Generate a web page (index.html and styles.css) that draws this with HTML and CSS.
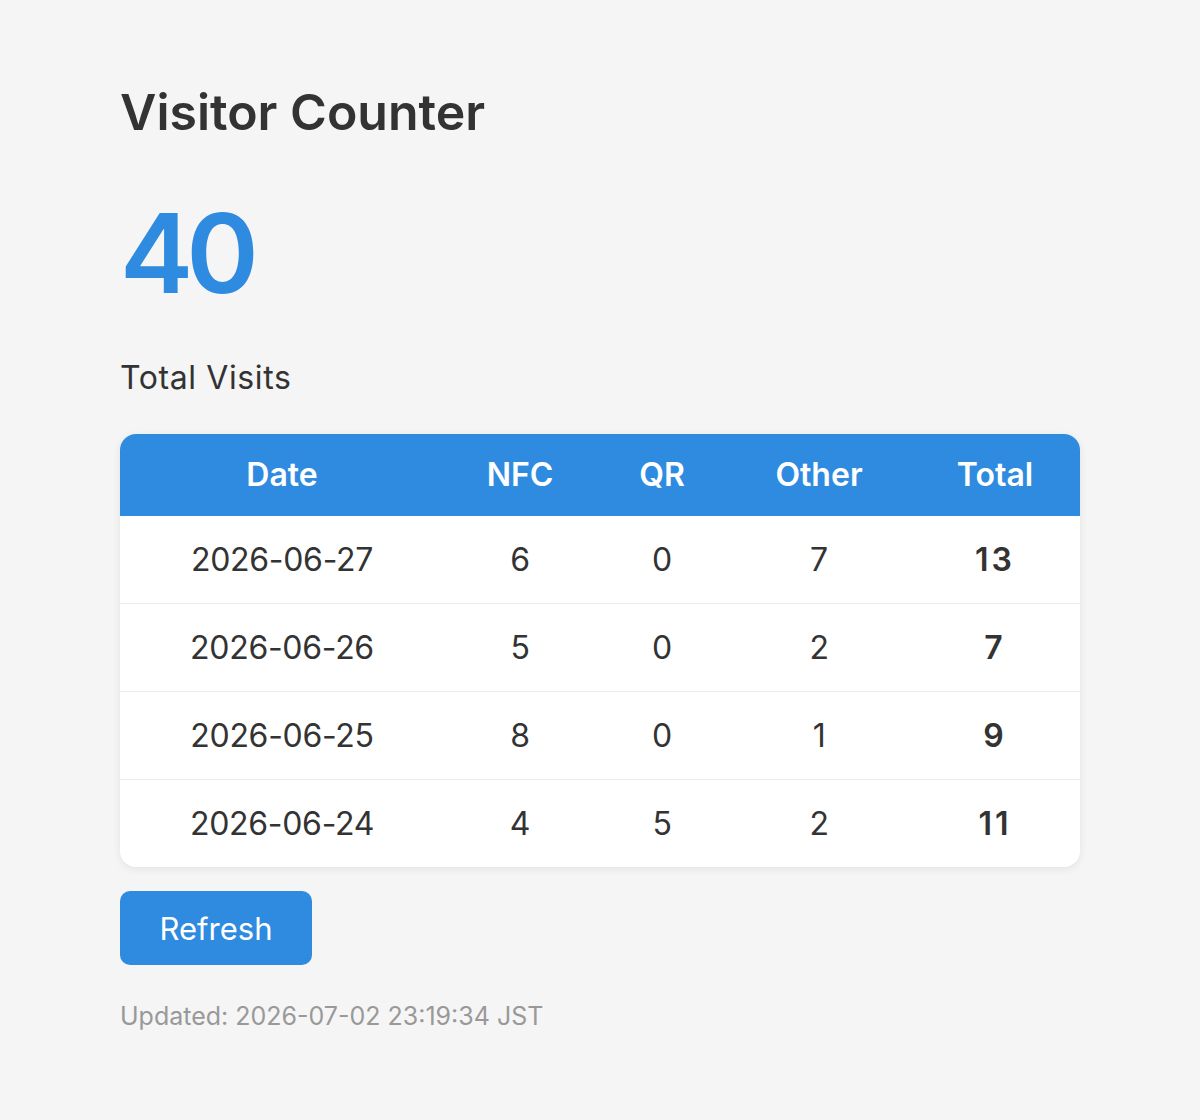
FILE: index.html
```html
<!DOCTYPE html>
<html lang="en">
  <head>
    <meta charset="UTF-8" />
    <meta name="viewport" content="width=device-width, initial-scale=1.0" />
    <title>Visitor Counter</title>
    <link rel="stylesheet" href="styles.css">
  </head>
  <body>
    <div class="container">
      <h1>Visitor Counter</h1>
      <div class="count" id="count">40</div>
      <div class="label">Total Visits</div>

      <table>
        <thead>
          <tr>
            <th class="col-date">Date</th>
            <th class="col-nfc">NFC</th>
            <th class="col-qr">QR</th>
            <th class="col-other">Other</th>
            <th class="col-total">Total</th>
          </tr>
        </thead>
        <tbody id="rows">
          <tr>
            <td>2026-06-27</td>
            <td>6</td>
            <td>0</td>
            <td>7</td>
            <td class="total">13</td>
          </tr>
          <tr>
            <td>2026-06-26</td>
            <td>5</td>
            <td>0</td>
            <td>2</td>
            <td class="total">7</td>
          </tr>
          <tr>
            <td>2026-06-25</td>
            <td>8</td>
            <td>0</td>
            <td>1</td>
            <td class="total">9</td>
          </tr>
          <tr>
            <td>2026-06-24</td>
            <td>4</td>
            <td>5</td>
            <td>2</td>
            <td class="total">11</td>
          </tr>
        </tbody>
      </table>

      <button class="refresh" type="button">Refresh</button>
      <p class="updated">Updated: 2026-07-02 23:19:34 JST</p>
    </div>
  </body>
</html>
```

FILE: styles.css
```css
body {
  margin: 0;
  padding: 0;
  background-color: #f5f5f5;
  color: #333;
  font-family: Inter, "Noto Sans CJK JP", sans-serif;
}
.container {
  width: 960px;
  padding: 80px 120px 40px;
}
h1 {
  margin: 0;
  font-size: 50px;
  line-height: 64px;
  font-weight: 600;
}
.count {
  margin-top: 54px;
  font-size: 110px;
  line-height: 110px;
  font-weight: 600;
  letter-spacing: -7px;
  color: #2e8be0;
}
.label {
  margin-top: 48px;
  font-size: 32px;
  line-height: 44px;
  letter-spacing: 0.6px;
}
table {
  width: 100%;
  margin-top: 34px;
  border-collapse: separate;
  border-spacing: 0;
  border-radius: 16px;
  overflow: hidden;
  background-color: #fff;
  box-shadow: 0 2px 8px rgba(0, 0, 0, 0.08);
  table-layout: fixed;
}
th,
td {
  text-align: center;
  font-size: 32px;
  line-height: 40px;
}
th {
  padding: 21px 0;
  background-color: #2e8be0;
  color: #fff;
  font-weight: 600;
}
td {
  padding: 24px 0 23px;
  border-bottom: 1px solid #ececec;
  letter-spacing: -0.3px;
}
tbody tr:last-child td {
  border-bottom: none;
}
.col-date {
  width: 324px;
}
.col-nfc {
  width: 152px;
}
.col-qr {
  width: 132px;
}
.col-other {
  width: 182px;
}
.col-total {
  width: 170px;
}
td.total {
  font-weight: 600;
  letter-spacing: 3px;
}
.refresh {
  display: block;
  margin-top: 24px;
  width: 192px;
  height: 74px;
  border: none;
  border-radius: 10px;
  background-color: #2e8be0;
  color: #fff;
  font-family: inherit;
  font-size: 31px;
  cursor: pointer;
}
.updated {
  margin: 34px 0 0;
  font-size: 25px;
  line-height: 34px;
  color: #999;
}
```
